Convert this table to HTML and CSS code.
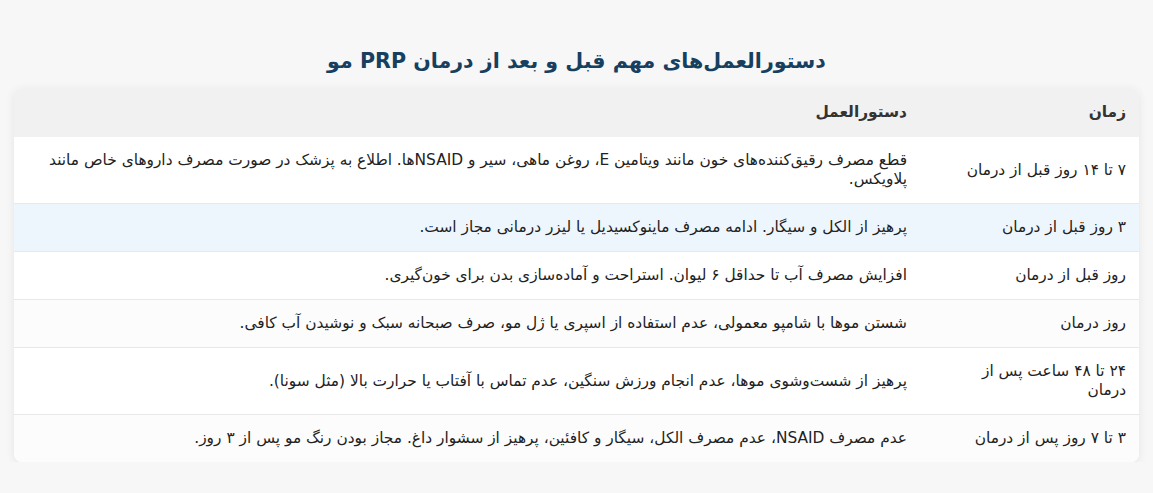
FILE: index.html
```html
<!DOCTYPE html>
<html lang="fa" dir="rtl">
<head>
<meta charset="utf-8">
<title>دستورالعمل‌های مهم قبل و بعد از درمان PRP مو</title>
<link rel="stylesheet" href="styles.css">
</head>
<body>
<main class="page">
  <h2 class="title">دستورالعمل‌های مهم قبل و بعد از درمان PRP مو</h2>
  <div class="card">
    <table class="guide">
      <colgroup><col class="col-time"><col></colgroup>
      <thead>
        <tr><th>زمان</th><th>دستورالعمل</th></tr>
      </thead>
      <tbody>
        <tr><td>۷ تا ۱۴ روز قبل از درمان</td><td>قطع مصرف رقیق‌کننده‌های خون مانند ویتامین E، روغن ماهی، سیر و NSAIDها. اطلاع به پزشک در صورت مصرف داروهای خاص مانند پلاویکس.</td></tr>
        <tr class="hover"><td>۳ روز قبل از درمان</td><td>پرهیز از الکل و سیگار. ادامه مصرف ماینوکسیدیل یا لیزر درمانی مجاز است.</td></tr>
        <tr><td>روز قبل از درمان</td><td>افزایش مصرف آب تا حداقل ۶ لیوان. استراحت و آماده‌سازی بدن برای خون‌گیری.</td></tr>
        <tr><td>روز درمان</td><td>شستن موها با شامپو معمولی، عدم استفاده از اسپری یا ژل مو، صرف صبحانه سبک و نوشیدن آب کافی.</td></tr>
        <tr><td>۲۴ تا ۴۸ ساعت پس از درمان</td><td>پرهیز از شست‌وشوی موها، عدم انجام ورزش سنگین، عدم تماس با آفتاب یا حرارت بالا (مثل سونا).</td></tr>
        <tr><td>۳ تا ۷ روز پس از درمان</td><td>عدم مصرف NSAID، عدم مصرف الکل، سیگار و کافئین، پرهیز از سشوار داغ. مجاز بودن رنگ مو پس از ۳ روز.</td></tr>
      </tbody>
    </table>
  </div>
</main>
</body>
</html>
```

FILE: styles.css
```css
html, body {
  margin: 0;
  padding: 0;
  background: #f7f7f7;
}
body {
  font-family: "DejaVu Sans", "Noto Sans", sans-serif;
  color: #222;
}
.page {
  padding: 0 14px;
}
.title {
  margin: 0;
  padding: 48px 0 13px;
  text-align: center;
  font-size: 20.6px;
  line-height: 27px;
  font-weight: bold;
  color: #173f5f;
}
.card {
  background: #fff;
  border-radius: 8px;
  box-shadow: 0 2px 10px rgba(0, 0, 0, 0.08);
  overflow: hidden;
}
.guide {
  width: 100%;
  border-collapse: collapse;
  table-layout: fixed;
  font-size: 15.4px;
}
.col-time {
  width: 219px;
}
.guide th,
.guide td {
  text-align: right;
  vertical-align: middle;
  padding: 14px 13px;
  line-height: 19px;
}
.guide td:first-child {
  padding-left: 26px;
}
.guide th {
  background: #f1f1f1;
  color: #333;
  font-weight: bold;
  padding: 15px 13px;
}
.guide tbody tr {
  border-top: 1px solid #e8e8e8;
}
.guide tbody tr:first-child {
  border-top: none;
}
.guide tbody tr:nth-child(even) {
  background: #fcfcfc;
}
.guide tbody tr.hover {
  background: #eef6fd;
}
```
